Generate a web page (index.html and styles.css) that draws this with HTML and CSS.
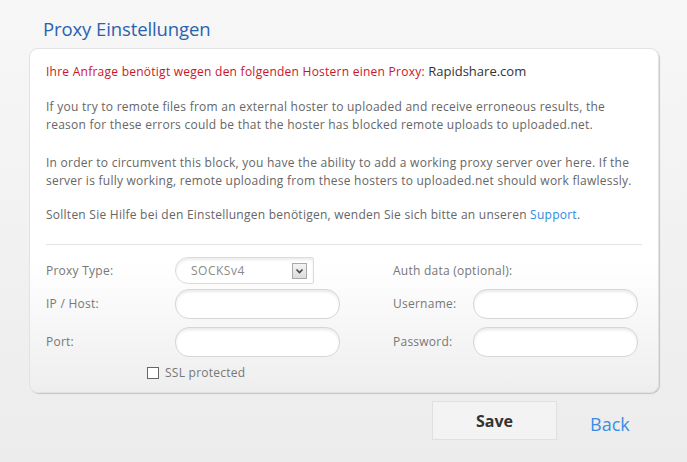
FILE: index.html
```html
<!DOCTYPE html>
<html lang="de">
<head>
<meta charset="utf-8">
<title>Proxy Einstellungen</title>
<link rel="stylesheet" href="styles.css">
</head>
<body>
<div class="page">
  <h1 class="title">Proxy Einstellungen</h1>
  <div class="card">
    <p class="notice">Ihre Anfrage benötigt wegen den folgenden Hostern einen Proxy: <span class="host">Rapidshare.com</span></p>
    <p class="text">If you try to remote files from an external hoster to uploaded and receive erroneous results, the reason for these errors could be that the hoster has blocked remote uploads to uploaded.net.</p>
    <p class="text second">In order to circumvent this block, you have the ability to add a working proxy server over here. If the server is fully working, remote uploading from these hosters to uploaded.net should work flawlessly.</p>
    <p class="text last">Sollten Sie Hilfe bei den Einstellungen benötigen, wenden Sie sich bitte an unseren <a class="link" href="#">Support</a>.</p>
    <div class="divider"></div>
    <div class="form">
      <span class="label label-select">Proxy Type:</span>
      <div class="select">
        <span class="select-value">SOCKSv4</span>
        <span class="select-arrow"><svg width="9" height="6" viewBox="0 0 9 6"><path d="M1.5 1.5 L4.5 4.5 L7.5 1.5" fill="none" stroke="#444" stroke-width="1.6"/></svg></span>
      </div>
      <span class="label label-select auth">Auth data (optional):</span>

      <span class="label">IP / Host:</span>
      <input class="input" type="text">
      <span class="label right-label">Username:</span>
      <input class="input right-field" type="text">

      <span class="label">Port:</span>
      <input class="input" type="text">
      <span class="label right-label">Password:</span>
      <input class="input right-field" type="password">
    </div>
    <label class="ssl"><span class="checkbox"></span>SSL protected</label>
  </div>
  <div class="actions">
    <button class="save" type="button">Save</button>
    <a class="back" href="#">Back</a>
  </div>
</div>
</body>
</html>
```

FILE: styles.css
```css
html, body {
  margin: 0;
  padding: 0;
}
body {
  background: linear-gradient(180deg, #f7f7f7 0%, #ececec 100%);
  min-height: 462px;
  font-family: "Open Sans", "Liberation Sans", sans-serif;
  font-size: 12px;
  color: #666;
}
.page {
  width: 630px;
  padding: 0 0 0 29px;
}
.title {
  margin: 0;
  padding: 16px 0 0 14px;
  height: 32px;
  font-family: "Open Sans", sans-serif;
  font-weight: 400;
  font-size: 18.5px;
  line-height: 26px;
  color: #2a62ae;
  letter-spacing: -0.1px;
}
.card {
  box-sizing: border-box;
  width: 630px;
  height: 345px;
  padding: 14px 16px 0 16px;
  border: 1px solid #e2e2e2;
  border-radius: 9px;
  background: linear-gradient(180deg, #ffffff 0%, #ffffff 62%, #eeeeee 100%);
  box-shadow: 1px 1px 1px rgba(0,0,0,0.18);
  letter-spacing: 0.25px;
}
.card p {
  margin: 0;
  line-height: 18px;
}
.notice {
  color: #cc1427;
  margin-bottom: 17px !important;
}
.host {
  color: #333;
  font-size: 13px;
  font-weight: 500;
  letter-spacing: 0;
  line-height: 12px;
}
.text {
  margin-bottom: 20px !important;
}
.text.second {
  margin-bottom: 16px !important;
}
.text.last {
  margin-bottom: 20px !important;
}
.link {
  color: #2a8be2;
  text-decoration: none;
}
.divider {
  height: 1px;
  background: #e3e3e3;
  margin-bottom: 12px;
}
.form {
  display: grid;
  grid-template-columns: 129px 165px 53px 80px 166px;
  grid-template-rows: 32px 38px 30px;
  align-items: start;
}
.label {
  line-height: 30px;
  color: #777;
  white-space: nowrap;
}
.label-select {
  line-height: 27px;
}
.auth {
  grid-column: 4 / 6;
}
.right-label {
  grid-column: 4;
}
.right-field {
  grid-column: 5;
}
.select {
  box-sizing: border-box;
  width: 139px;
  height: 27px;
  border: 1px solid #dcdcdc;
  border-radius: 13px 2px 2px 13px;
  background: #fff;
  box-shadow: inset 0 2px 3px rgba(0,0,0,0.08);
  display: flex;
  align-items: center;
  justify-content: space-between;
  padding: 0 6px 0 15px;
}
.select-value {
  color: #8a8a8a;
  letter-spacing: 0.5px;
}
.select-arrow {
  box-sizing: border-box;
  width: 15px;
  height: 16px;
  border: 1px solid #a9a9a9;
  background: linear-gradient(180deg, #f4f4f4, #dcdcdc);
  display: flex;
  align-items: center;
  justify-content: center;
}
.input {
  box-sizing: border-box;
  width: 165px;
  height: 30px;
  margin: 0;
  border: 1px solid #d6d6d6;
  border-radius: 14px;
  background: #fff;
  box-shadow: inset 0 2px 3px rgba(0,0,0,0.09);
  outline: none;
  font: inherit;
}
.ssl {
  display: flex;
  align-items: center;
  gap: 6px;
  margin: 9px 0 0 101px;
  color: #777;
  line-height: 14px;
}
.checkbox {
  box-sizing: border-box;
  width: 12px;
  height: 12px;
  border: 1px solid #666;
  background: #fff;
}
.actions {
  display: flex;
  align-items: center;
  padding: 8px 0 0 403px;
  gap: 33px;
}
.save {
  width: 125px;
  height: 39px;
  border: 1px solid #e0e0e0;
  background: #f3f3f3;
  font-family: "Open Sans", sans-serif;
  font-weight: 700;
  font-size: 16px;
  color: #333;
  padding: 0;
}
.back {
  font-family: "Open Sans", sans-serif;
  font-size: 18px;
  color: #3a8de6;
  text-decoration: none;
  margin-top: 6px;
}
```
